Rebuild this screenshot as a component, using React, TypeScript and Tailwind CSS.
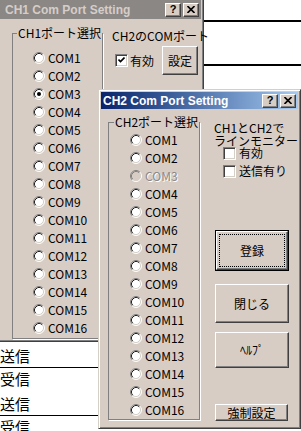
import React from "react";

function Radio({ checked = false, disabled = false }: { checked?: boolean; disabled?: boolean }) {
  return (
    <svg width="12" height="12" viewBox="0 0 12 12" className="block shrink-0">
      <circle cx="6" cy="6" r="5" fill={disabled ? "#d8cdc5" : "#ffffff"} />
      <path d="M2.11 9.89 A5.5 5.5 0 0 1 9.89 2.11" fill="none" stroke="#808080" />
      <path d="M9.89 2.11 A5.5 5.5 0 0 1 2.11 9.89" fill="none" stroke="#ffffff" />
      <path d="M2.82 9.18 A4.5 4.5 0 0 1 9.18 2.82" fill="none" stroke={disabled ? "#808080" : "#202020"} />
      <path d="M9.18 2.82 A4.5 4.5 0 0 1 2.82 9.18" fill="none" stroke="#d4d0c8" />
      {checked && <circle cx="6" cy="6" r="2" fill="#000000" />}
    </svg>
  );
}

function Check({ checked = false }: { checked?: boolean }) {
  return (
    <div className="w-[13px] h-[13px] shrink-0 bg-white border border-t-[#808080] border-l-[#808080] border-r-white border-b-white shadow-[inset_1px_1px_0_#404040,inset_-1px_-1px_0_#d4d0c8] flex items-center justify-center">
      {checked && (
        <svg width="7" height="7" viewBox="0 0 7 7" className="block">
          <path d="M0.5 2.5 L2.5 4.5 L6.5 0.5" fill="none" stroke="#000" strokeWidth="1.6" />
        </svg>
      )}
    </div>
  );
}

function TBtn({ kind }: { kind: "help" | "close" }) {
  return (
    <div className="w-[16px] h-[14px] bg-[#d8cdc5] border border-t-white border-l-white border-r-[#404040] border-b-[#404040] shadow-[inset_-1px_-1px_0_#808080] flex items-center justify-center">
      {kind === "help" ? (
        <span className="font-['Liberation_Sans',sans-serif] font-bold text-[11px] leading-[11px] text-black">?</span>
      ) : (
        <svg width="8" height="7" viewBox="0 0 8 7" className="block">
          <path d="M0.5 0 L7.5 7 M7.5 0 L0.5 7" stroke="#000" strokeWidth="1.6" />
        </svg>
      )}
    </div>
  );
}

function Btn({ children, className = "" }: { children: React.ReactNode; className?: string }) {
  return (
    <div
      className={
        "bg-[#d8cdc5] border border-t-white border-l-white border-r-[#404040] border-b-[#404040] shadow-[inset_-1px_-1px_0_#808080] flex items-center justify-center text-[12px] leading-[12px] " +
        className
      }
    >
      {children}
    </div>
  );
}

const ports = Array.from({ length: 16 }, (_, i) => `COM${i + 1}`);

export default function App() {
  return (
    <div className="relative w-[301px] h-[431px] overflow-hidden bg-white text-black text-[12px] leading-[12px] font-['Noto_Sans_CJK_JP','Liberation_Sans',sans-serif]">
      {/* background application */}
      <div className="flex flex-col w-full">
        <div className="h-[22px] border-b-2 border-black" />
        <div className="h-[44px] border-b-2 border-black" />
        <div className="h-[230px]" />
        {[0, 1, 2, 3, 4, 5].map((i) => (
          <div
            key={i}
            className={
              "h-[24px] flex items-center text-[15px] leading-[15px] " +
              (i % 2 === 0 ? "border-b border-black" : "pb-[3px]")
            }
          >
            {i % 2 === 0 ? "送信" : "受信"}
          </div>
        ))}
      </div>

      {/* CH1 window */}
      <div className="absolute left-[-3px] top-[-3px] w-[207px] h-[345px] bg-[#d8cdc5] border border-t-[#d4d0c8] border-l-[#d4d0c8] border-r-[#404040] border-b-[#404040] p-[2px] shadow-[inset_1px_1px_0_#ffffff,inset_-1px_-1px_0_#808080] flex flex-col">
        <div className="h-[19px] shrink-0 bg-[#8a8785] flex items-center justify-between pl-[5px] pr-[2px]">
          <span className="font-['Liberation_Sans',sans-serif] font-bold text-[12px] leading-[12px] text-[#d6cdc8] whitespace-nowrap">
            CH1 Com Port Setting
          </span>
          <div className="flex gap-[2px]">
            <TBtn kind="help" />
            <TBtn kind="close" />
          </div>
        </div>
        <div className="flex items-start">
          <fieldset className="ml-[12px] mt-[8px] w-[86px] border border-[#808080] shadow-[1px_1px_0_#ffffff]">
            <legend className="ml-[4px] px-[1px] leading-[12px] bg-[#d8cdc5] whitespace-nowrap">CH1ポート選択</legend>
            <div className="flex flex-col pl-[20px] pt-[10px] pb-[1px]">
              {ports.map((p, i) => (
                <div key={p} className="h-[18px] flex items-center gap-[3px]">
                  <Radio checked={i === 2} />
                  <span>{p}</span>
                </div>
              ))}
            </div>
          </fieldset>
          <div className="ml-[9px] mt-[11px] flex flex-col">
            <div className="whitespace-nowrap">CH2のCOMポート</div>
            <div className="flex mt-[4px]">
              <div className="w-[50px] flex items-center gap-[2px] pl-[3px] mt-[8px] h-[13px]">
                <Check checked />
                <span>有効</span>
              </div>
              <Btn className="w-[36px] h-[29px]">設定</Btn>
            </div>
          </div>
        </div>
      </div>

      {/* CH2 window */}
      <div className="absolute left-[98px] top-[89px] w-[203px] h-[340px] bg-[#d8cdc5] border border-t-[#d4d0c8] border-l-[#d4d0c8] border-r-[#404040] border-b-[#404040] p-[2px] shadow-[inset_1px_1px_0_#ffffff,inset_-1px_-1px_0_#808080] flex flex-col">
        <div className="h-[17px] shrink-0 bg-linear-to-r from-[#0a246a] to-[#a6caf0] flex items-center justify-between pl-[2px] pr-[2px]">
          <span className="font-['Liberation_Sans',sans-serif] font-bold text-[12px] leading-[12px] text-white whitespace-nowrap">
            CH2 Com Port Setting
          </span>
          <div className="flex gap-[2px]">
            <TBtn kind="help" />
            <TBtn kind="close" />
          </div>
        </div>
        <div className="flex items-start">
          <fieldset className="ml-[7px] mt-[7px] w-[89px] border border-[#808080] shadow-[1px_1px_0_#ffffff]">
            <legend className="ml-[5px] px-[1px] leading-[12px] bg-[#d8cdc5] whitespace-nowrap">CH2ポート選択</legend>
            <div className="flex flex-col pl-[21px] pt-[3px]">
              {ports.map((p, i) => (
                <div key={p} className="h-[18px] flex items-center gap-[3px]">
                  <Radio disabled={i === 2} />
                  <span className={i === 2 ? "text-[#8a8a8a] [text-shadow:1px_1px_0_#ffffff]" : ""}>{p}</span>
                </div>
              ))}
            </div>
          </fieldset>
          <div className="ml-[14px] mt-[12px] flex flex-col">
            <div className="whitespace-nowrap leading-[13px]">
              <div>CH1とCH2で</div>
              <div>ラインモニター</div>
            </div>
            <div className="flex flex-col gap-[4px] pl-[9px] mt-[-1px]">
              <div className="h-[14px] flex items-center gap-[3px]">
                <Check />
                <span>有効</span>
              </div>
              <div className="h-[14px] flex items-center gap-[3px]">
                <Check />
                <span className="whitespace-nowrap">送信有り</span>
              </div>
            </div>
            <div className="ml-[1px] mt-[52px] w-[74px] h-[41px] border border-black flex">
              <div className="flex-1 bg-[#d8cdc5] border border-t-white border-l-white border-r-[#404040] border-b-[#404040] shadow-[inset_-1px_-1px_0_#808080] p-[2px] flex">
                <div className="flex-1 border border-dotted border-black flex items-center justify-center">登録</div>
              </div>
            </div>
            <Btn className="ml-[1px] mt-[13px] w-[74px] h-[39px]">閉じる</Btn>
            <Btn className="ml-[1px] mt-[9px] w-[74px] h-[36px]">ﾍﾙﾌﾟ</Btn>
            <Btn className="ml-[1px] mt-[36px] w-[73px] h-[17px]">強制設定</Btn>
          </div>
        </div>
      </div>
    </div>
  );
}
